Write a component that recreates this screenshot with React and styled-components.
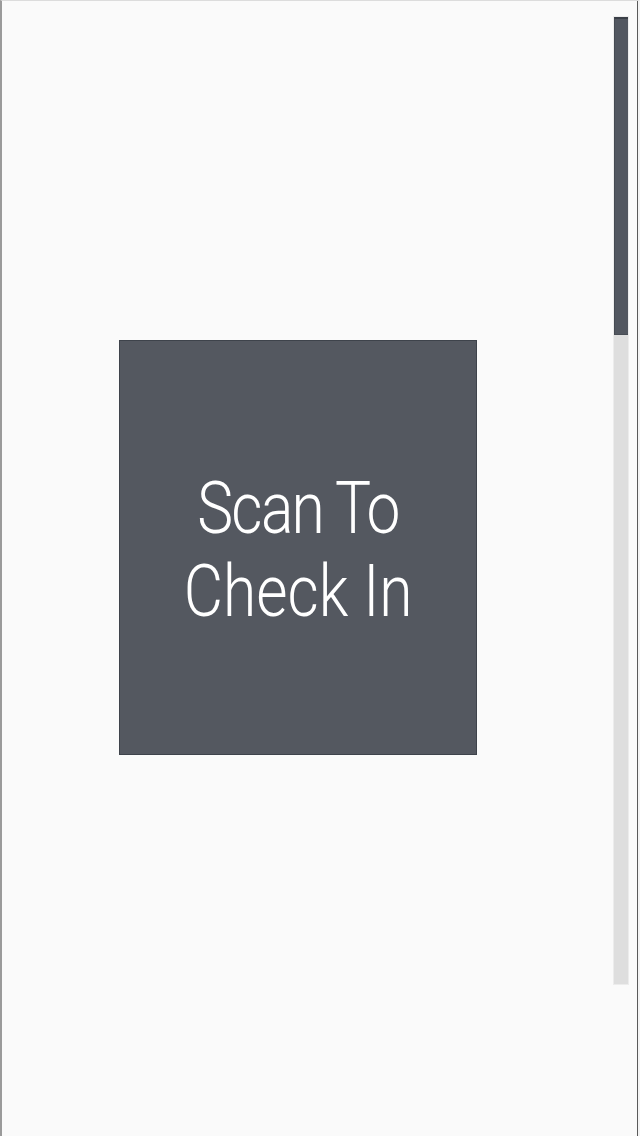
import React from "react";
import styled, { createGlobalStyle } from "styled-components";

const GlobalStyle = createGlobalStyle`
  html, body {
    margin: 0;
    padding: 0;
    background: #fafafa;
  }
  * {
    box-sizing: border-box;
  }
`;

const Screen = styled.div`
  width: 640px;
  height: 1136px;
  display: flex;
  background: #fafafa;
  border-top: 1px solid #dcdcdc;
  border-left: 2px solid #9a9a9a;
  border-right: 2px solid #f4f4f4;
  box-shadow: inset -1px 0 0 #5a5a5a;
  overflow: hidden;
`;

const Stage = styled.main`
  width: 592px;
  display: flex;
  justify-content: center;
  align-items: flex-start;
  padding-top: 339px;
`;

const ScanBox = styled.button`
  width: 358px;
  height: 415px;
  display: flex;
  flex-direction: column;
  align-items: center;
  justify-content: center;
  background: #545860;
  border: none;
  box-shadow: inset 1px 1px 0 #3e434b, inset -1px -1px 0 #3e434b;
  padding: 5px 0 0;
  cursor: pointer;
`;

const Label = styled.span`
  display: block;
  color: #ffffff;
  font-family: Roboto, "Liberation Sans", sans-serif;
  font-weight: 300;
  font-size: 72px;
  line-height: 83px;
  white-space: nowrap;
  letter-spacing: ${(props) => props.$tracking || 0}px;
  transform: scaleX(0.84);
`;

const Rail = styled.aside`
  width: 16px;
  margin: 15px 0 0 19px;
  height: 969px;
  display: flex;
  flex-direction: column;
  background: #dedede;
  border: 1px solid #ececec;
`;

const Thumb = styled.div`
  height: ${(props) => props.size}px;
  background: #525760;
  border-top: 2px solid #3a3f47;
  border-left: 1px solid #454a52;
  border-bottom: 1px solid #484d55;
`;

export default function App() {
  return (
    <>
      <GlobalStyle />
      <Screen>
        <Stage>
          <ScanBox>
            <Label $tracking={-2}>Scan To</Label>
            <Label>Check In</Label>
          </ScanBox>
        </Stage>
        <Rail>
          <Thumb size={318} />
        </Rail>
      </Screen>
    </>
  );
}
